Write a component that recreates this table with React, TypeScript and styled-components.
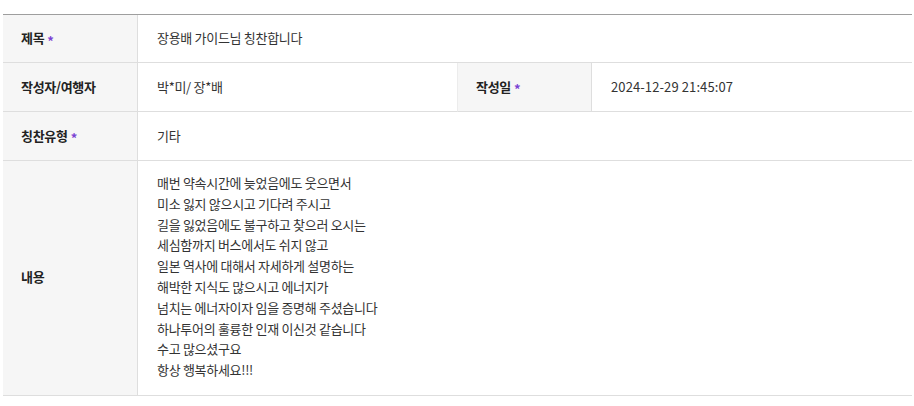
import React from "react";
import styled, { createGlobalStyle } from "styled-components";

const Global = createGlobalStyle`
  html, body { margin: 0; padding: 0; background: #fff; }
  body { font-family: "Noto Sans CJK KR", "Noto Sans", sans-serif; }
`;

const Page = styled.div`
  padding: 14px 2px 0 3px;
`;

const Table = styled.div`
  border-top: 1px solid #9e9e9e;
  display: grid;
  grid-template-columns: 135px 319px 135px 1fr;
  grid-template-rows: 48px 49px 49px auto;
`;

const Label = styled.div<{ $divider?: boolean }>`
  background: #f6f6f6;
  border-bottom: 1px solid #dedede;
  border-right: 1px solid #dedede;
  border-left: ${(p) => (p.$divider ? "1px solid #ececec" : "none")};
  padding: 0 18px 2px;
  display: flex;
  align-items: center;
  box-sizing: border-box;
  font-size: 13px;
  font-weight: 700;
  color: #222;
  letter-spacing: -0.3px;
`;

const Value = styled.div<{ $span?: number; $multi?: boolean; $numeric?: boolean }>`
  grid-column: span ${(p) => p.$span ?? 1};
  border-bottom: 1px solid #dedede;
  padding: ${(p) => (p.$multi ? "12px 19px 14px" : "0 19px 2px")};
  display: flex;
  align-items: center;
  box-sizing: border-box;
  font-size: 13px;
  color: #333;
  letter-spacing: ${(p) => (p.$numeric ? "0.1px" : "-0.3px")};
`;

const Req = styled.span`
  color: #7b43d3;
  margin: 5px 0 0 3px;
  font-weight: 700;
  font-size: 13px;
`;

const Lines = styled.div`
  line-height: 20.8px;
  white-space: pre-line;
`;

const content = `매번 약속시간에 늦었음에도 웃으면서
미소 잃지 않으시고 기다려 주시고
길을 잃었음에도 불구하고 찾으러 오시는
세심함까지 버스에서도 쉬지 않고
일본 역사에 대해서 자세하게 설명하는
해박한 지식도 많으시고 에너지가
넘치는 에너자이자 임을 증명해 주셨습니다
하나투어의 훌륭한 인재 이신것 같습니다
수고 많으셨구요
항상 행복하세요!!!`;

export default function App() {
  return (
    <>
      <Global />
      <Page>
        <Table>
          <Label>
            제목<Req>*</Req>
          </Label>
          <Value $span={3}>장용배 가이드님 칭찬합니다</Value>

          <Label>작성자/여행자</Label>
          <Value>박*미/ 장*배</Value>
          <Label $divider>
            작성일<Req>*</Req>
          </Label>
          <Value $numeric>2024-12-29 21:45:07</Value>

          <Label>
            칭찬유형<Req>*</Req>
          </Label>
          <Value $span={3}>기타</Value>

          <Label>내용</Label>
          <Value $span={3} $multi>
            <Lines>{content}</Lines>
          </Value>
        </Table>
      </Page>
    </>
  );
}
